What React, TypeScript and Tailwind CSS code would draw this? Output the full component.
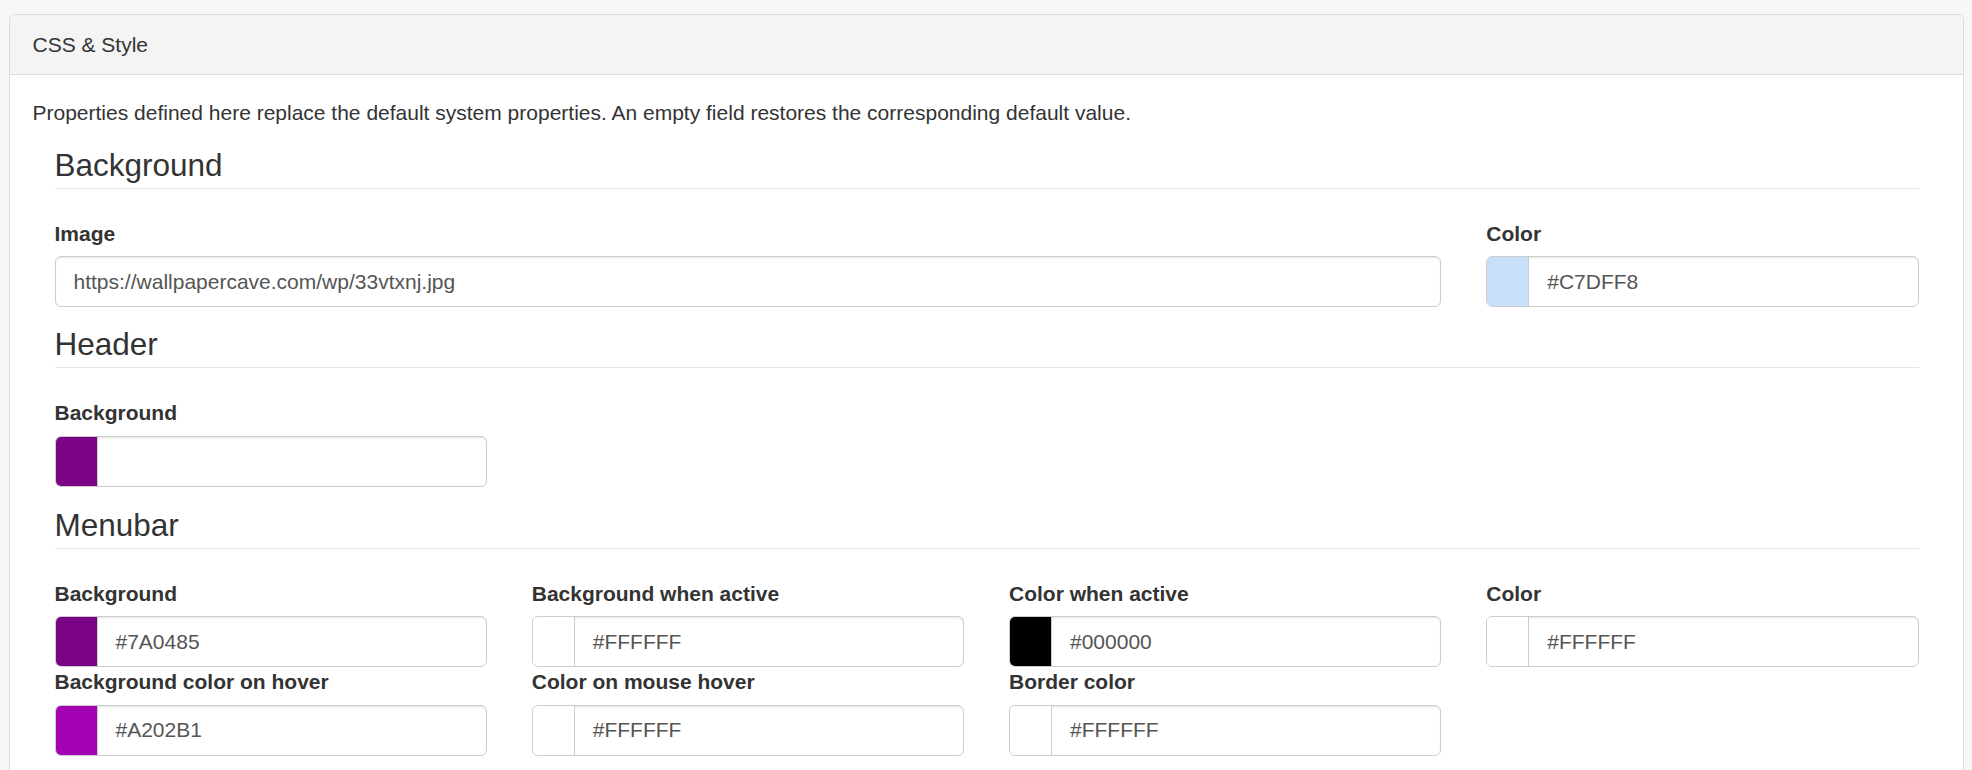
import React from "react";

type Field = { label: string; color: string; value: string };

function ColorInput({ color, value }: { color: string; value: string }) {
  return (
    <div className="flex h-[51px] overflow-hidden rounded-[6px] border-[1.5px] border-[#ccc] bg-white shadow-[inset_0_1.5px_1.5px_rgba(0,0,0,0.075)]">
      <div
        className="w-[42px] shrink-0 border-r-[1.5px] border-[#ccc]"
        style={{ backgroundColor: color }}
      />
      <div className="flex items-center pl-[18px] text-[21px] text-[#555]">
        {value}
      </div>
    </div>
  );
}

function ColorField({ label, color, value }: Field) {
  return (
    <div>
      <label className="mb-[7.5px] block text-[21px] font-bold leading-[30px] text-[#333]">
        {label}
      </label>
      <ColorInput color={color} value={value} />
    </div>
  );
}

function Legend({ children }: { children: React.ReactNode }) {
  return (
    <div className="mb-[30px] border-b-[1.5px] border-[#e5e5e5] text-[31.5px] leading-[45px] text-[#333]">
      {children}
    </div>
  );
}

const menubar: Field[] = [
  { label: "Background", color: "#7A0485", value: "#7A0485" },
  { label: "Background when active", color: "#FFFFFF", value: "#FFFFFF" },
  { label: "Color when active", color: "#000000", value: "#000000" },
  { label: "Color", color: "#FFFFFF", value: "#FFFFFF" },
  { label: "Background color on hover", color: "#A202B1", value: "#A202B1" },
  { label: "Color on mouse hover", color: "#FFFFFF", value: "#FFFFFF" },
  { label: "Border color", color: "#FFFFFF", value: "#FFFFFF" },
];

export default function App() {
  return (
    <div
      className="min-h-[770px] bg-[#f7f7f7] pl-[9px] pr-[8px] pt-[14px]"
      style={{ fontFamily: '"Liberation Sans", Arial, sans-serif' }}
    >
      <div className="rounded-[6px] border-[1.5px] border-[#dcdcdc] bg-white">
        <div className="rounded-t-[6px] border-b-[1.5px] border-[#dcdcdc] bg-[#f4f4f4] px-[22.5px] py-[14.5px] text-[21px] leading-[30px] text-[#333]">
          CSS &amp; Style
        </div>
        <div className="p-[22.5px]">
          <p className="mb-[15px] text-[21px] leading-[30px] text-[#333]">
            Properties defined here replace the default system properties. An
            empty field restores the corresponding default value.
          </p>

          <div className="px-[22px]">
            {/* Background */}
            <Legend>Background</Legend>
            <div className="mb-[15px] grid grid-cols-4 gap-x-[45px]">
              <div className="col-span-3">
                <label className="mb-[7.5px] block text-[21px] font-bold leading-[30px] text-[#333]">
                  Image
                </label>
                <div className="flex h-[51px] items-center rounded-[6px] border-[1.5px] border-[#ccc] bg-white px-[18px] text-[21px] text-[#555] shadow-[inset_0_1.5px_1.5px_rgba(0,0,0,0.075)]">
                  https://wallpapercave.com/wp/33vtxnj.jpg
                </div>
              </div>
              <ColorField label="Color" color="#C7DFF8" value="#C7DFF8" />
            </div>

            {/* Header */}
            <Legend>Header</Legend>
            <div className="mb-[16px] grid grid-cols-4 gap-x-[45px]">
              <ColorField label="Background" color="#7A0485" value="" />
            </div>

            {/* Menubar */}
            <Legend>Menubar</Legend>
            <div className="grid grid-cols-4 gap-x-[45px]">
              {menubar.map((f) => (
                <ColorField key={f.label} {...f} />
              ))}
            </div>
          </div>
        </div>
      </div>
    </div>
  );
}
